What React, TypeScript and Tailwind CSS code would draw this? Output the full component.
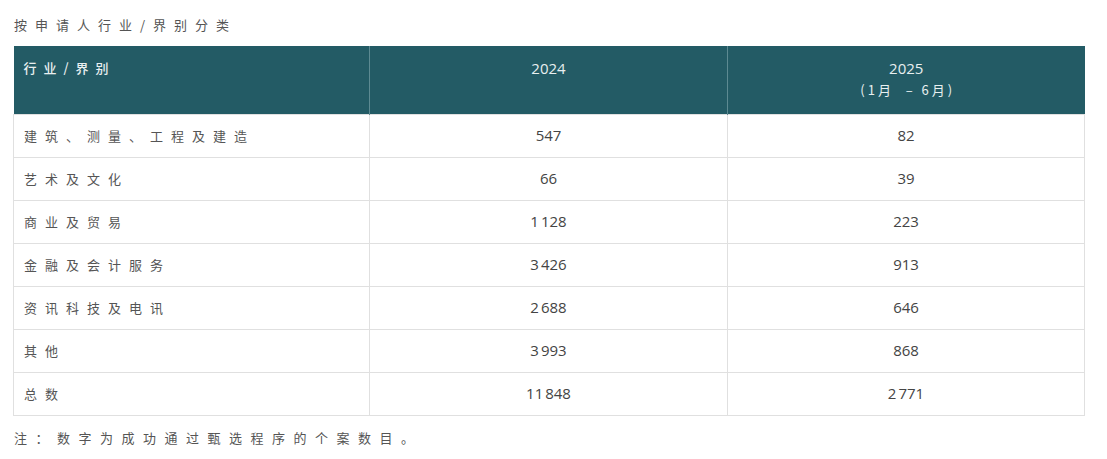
const rows: [string, string, string][] = [
  ['建筑、测量、工程及建造', '547', '82'],
  ['艺术及文化', '66', '39'],
  ['商业及贸易', '1\u202f128', '223'],
  ['金融及会计服务', '3\u202f426', '913'],
  ['资讯科技及电讯', '2\u202f688', '646'],
  ['其他', '3\u202f993', '868'],
  ['总数', '11\u202f848', '2\u202f771'],
];

const cjk = "font-['Noto_Sans_CJK_SC',sans-serif]";
const num = "font-['Open_Sans','Noto_Sans_CJK_SC',sans-serif]";

export default function App() {
  return (
    <div className="w-[1107px] h-[459px] bg-white px-[13px] pt-[14px] text-[#555]">
      <p className={`${cjk} text-[13px] leading-[22px] tracking-[8px] pl-px`}>按申请人行业/界别分类</p>

      <table className="mt-[10px] w-[1071px] border-collapse table-fixed">
        <colgroup>
          <col className="w-[356px]" />
          <col className="w-[358px]" />
          <col className="w-[357px]" />
        </colgroup>
        <thead>
          <tr className="bg-[#235b65] text-[#e8eff0] h-[68px] align-top">
            <th className={`${cjk} text-left font-medium text-[13px] tracking-[7px] pl-[10px] pt-[12px] border-r border-[#5d8a92]`}>
              行业/界别
            </th>
            <th className={`${num} font-normal text-[15px] leading-[22px] pt-[11px] border-r border-[#5d8a92]`}>2024</th>
            <th className={`${num} font-normal text-[15px] leading-[22px] pt-[11px]`}>
              <div>2025</div>
              <div className={`${cjk} text-[13px] tracking-[3px] pl-[3px]`}>(1月 &nbsp;– 6月)</div>
            </th>
          </tr>
        </thead>
        <tbody>
          {rows.map(([label, a, b]) => (
            <tr key={label} className="h-[43px]">
              <td className={`${cjk} text-[13px] tracking-[8px] pl-[10px] border border-[#e0e0e0]`}>{label}</td>
              <td className={`${num} text-[15px] text-center text-[#444] border border-[#e0e0e0]`}>{a}</td>
              <td className={`${num} text-[15px] text-center text-[#444] border border-[#e0e0e0]`}>{b}</td>
            </tr>
          ))}
        </tbody>
      </table>

      <p className={`${cjk} mt-[11px] text-[13px] leading-[22px] tracking-[8.5px] pl-px`}>注：数字为成功通过甄选程序的个案数目。</p>
    </div>
  );
}
